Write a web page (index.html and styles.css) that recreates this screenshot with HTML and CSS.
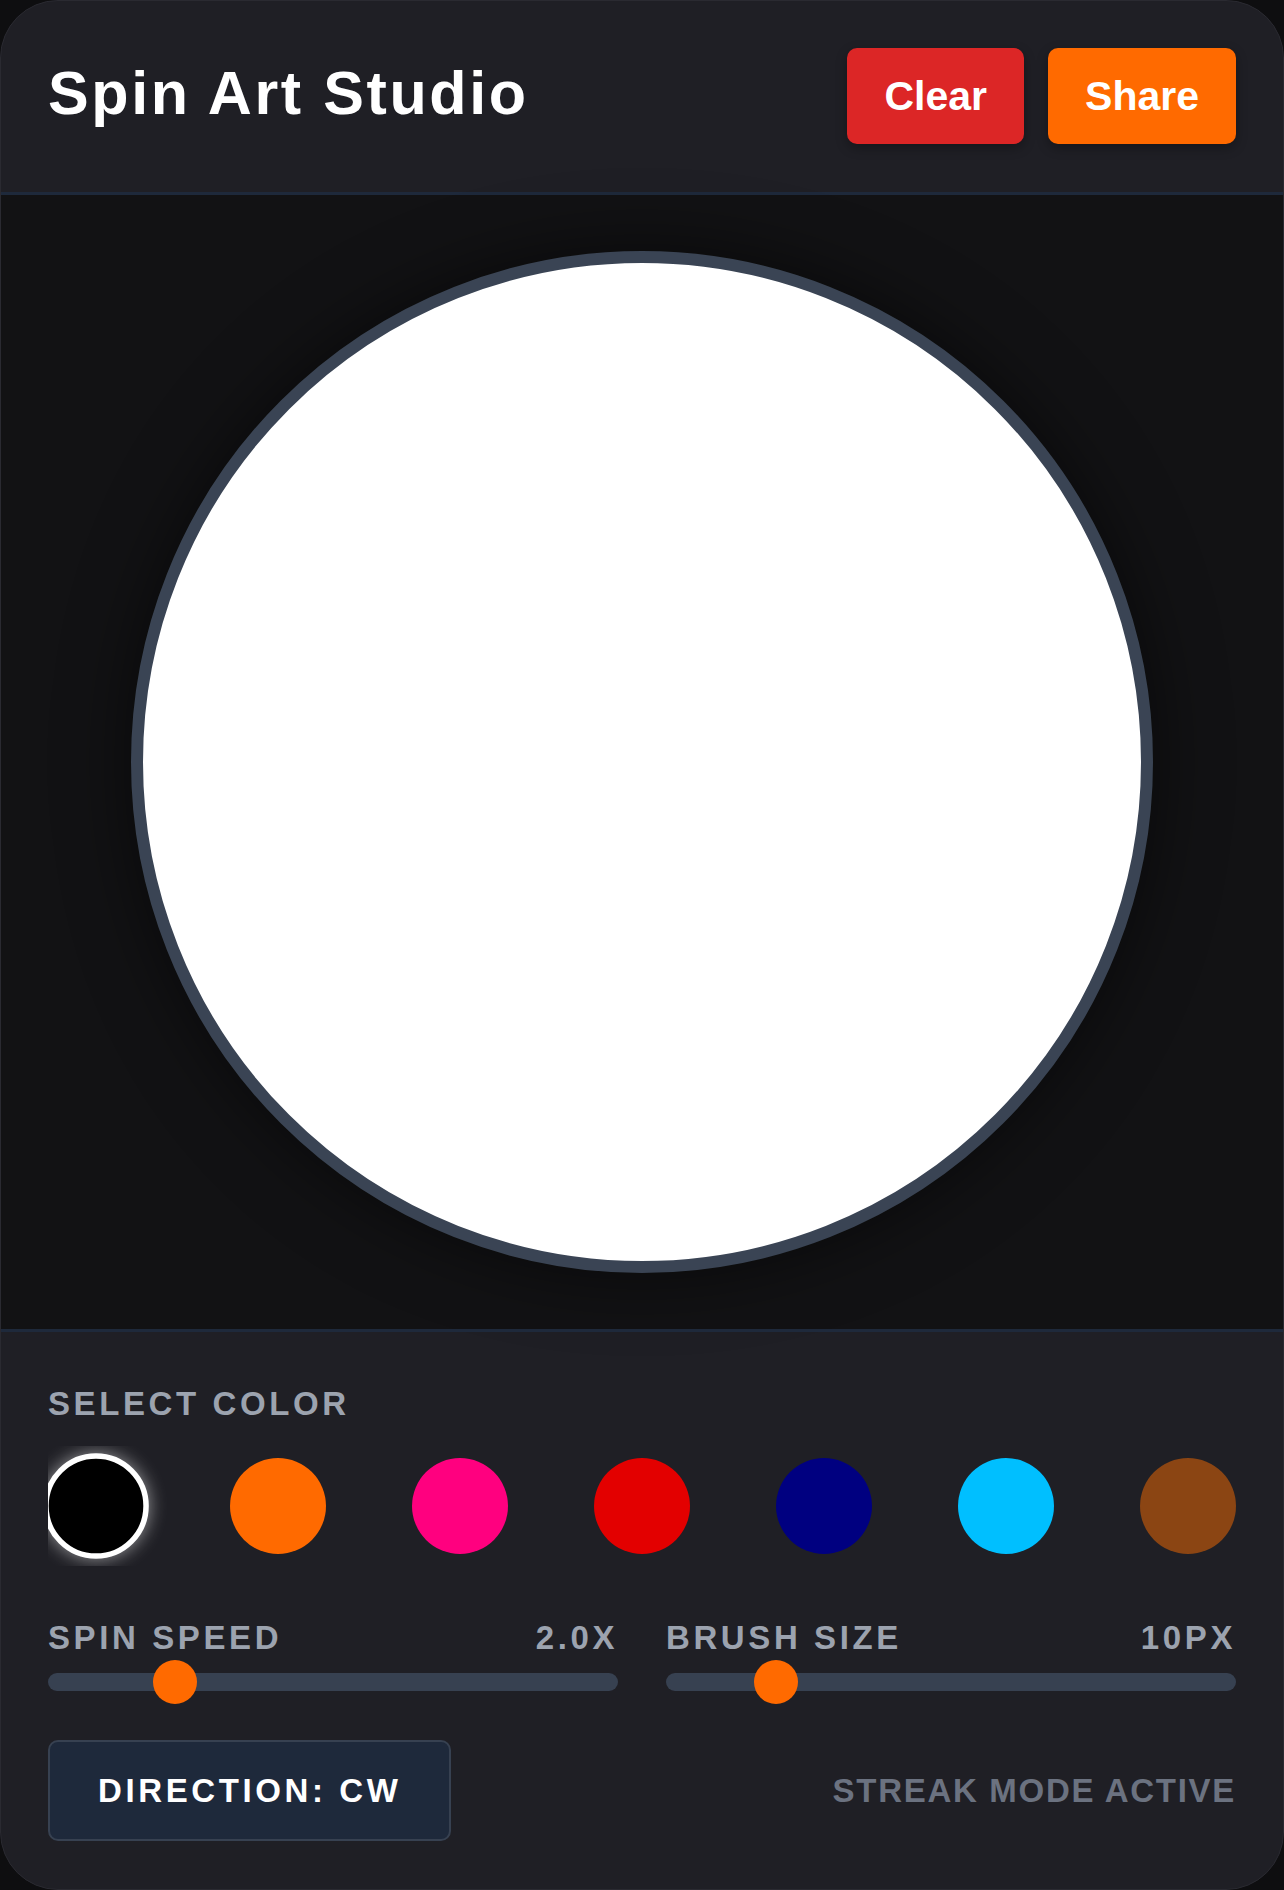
FILE: index.html
```html
<!DOCTYPE html>
<html lang="en">
  <head>
    <meta charset="UTF-8" />
    <meta name="viewport" content="width=device-width, initial-scale=1.0" />
    <title>Spin Art Studio</title>

    <link rel="stylesheet" href="styles.css">
  </head>

  <body>
    <div class="studio">
      <header class="top-bar">
        <h1 class="title">Spin Art Studio</h1>
        <div class="actions">
          <button class="btn btn-clear" id="clear" type="button">Clear</button>
          <button class="btn btn-share" id="share" type="button">Share</button>
        </div>
      </header>

      <main class="stage">
        <canvas id="disc" class="disc" width="998" height="998"></canvas>
      </main>

      <section class="controls">
        <h3 class="label">Select Color</h3>
        <div class="palette">
          <button class="swatch black selected" type="button"></button>
          <button class="swatch orange" type="button"></button>
          <button class="swatch pink" type="button"></button>
          <button class="swatch red" type="button"></button>
          <button class="swatch navy" type="button"></button>
          <button class="swatch cyan" type="button"></button>
          <button class="swatch brown" type="button"></button>
        </div>

        <div class="sliders">
          <div class="slider">
            <div class="slider-head">
              <span class="label">Spin Speed</span>
              <span class="label" id="speed-value">2.0x</span>
            </div>
            <input type="range" id="speed" min="0" max="10" step="0.1" value="2" />
          </div>
          <div class="slider">
            <div class="slider-head">
              <span class="label">Brush Size</span>
              <span class="label" id="size-value">10px</span>
            </div>
            <input type="range" id="size" min="2" max="50" step="1" value="10" />
          </div>
        </div>

        <div class="footer-row">
          <button class="direction" id="direction" type="button">Direction: CW</button>
          <span class="streak">Streak mode active</span>
        </div>
      </section>
    </div>

    <script>
      const speed = document.getElementById('speed');
      const size = document.getElementById('size');
      const direction = document.getElementById('direction');
      const swatches = document.querySelectorAll('.swatch');
      let clockwise = true;

      speed.addEventListener('input', (e) => {
        document.getElementById('speed-value').textContent =
          Number(e.target.value).toFixed(1) + 'x';
      });

      size.addEventListener('input', (e) => {
        document.getElementById('size-value').textContent = e.target.value + 'px';
      });

      direction.addEventListener('click', () => {
        clockwise = !clockwise;
        direction.textContent = 'Direction: ' + (clockwise ? 'CW' : 'CCW');
      });

      swatches.forEach((swatch) => {
        swatch.addEventListener('click', () => {
          swatches.forEach((s) => s.classList.remove('selected'));
          swatch.classList.add('selected');
        });
      });
    </script>
  </body>
</html>
```

FILE: styles.css
```css
:root {
  --page-color: #0e0e10;
  --panel-color: #1f1f25;
  --stage-color: #121214;
  --line-color: #1e293b;
  --track-color: #374151;
  --accent-color: #ff6a00;
  --muted-color: #9ca3af;
  --font-family: "Liberation Sans", Arial, sans-serif;
}

* {
  box-sizing: border-box;
}

body {
  margin: 0;
  height: 100vh;
  background-color: var(--page-color);
  font-family: var(--font-family);
  color: #fff;
}

.studio {
  display: flex;
  flex-direction: column;
  height: 100vh;
  border: 1px solid #2a2a31;
  border-radius: 58px;
  overflow: hidden;
  background-color: var(--panel-color);
}

.top-bar {
  display: flex;
  align-items: center;
  justify-content: space-between;
  padding: 47px 47px 48px;
  border-bottom: 3px solid var(--line-color);
}

.title {
  margin: 0 0 5px;
  font-size: 61px;
  font-weight: bold;
  letter-spacing: 2.6px;
  line-height: 1.15;
}

.actions {
  display: flex;
  gap: 24px;
}

.btn {
  padding: 24px 37px;
  border: none;
  border-radius: 10px;
  font-family: inherit;
  font-size: 41px;
  font-weight: bold;
  line-height: 48px;
  color: #fff;
  cursor: pointer;
  box-shadow: 0 4px 12px rgba(0, 0, 0, 0.3);
}

.btn-clear {
  background-color: #dc2626;
}

.btn-share {
  background-color: var(--accent-color);
}

.stage {
  flex: 1;
  display: flex;
  align-items: center;
  justify-content: center;
  background-color: var(--stage-color);
}

.disc {
  display: block;
  width: 1022px;
  height: 1022px;
  border: 12px solid #3a4454;
  border-radius: 50%;
  background-color: #fff;
  box-shadow: 0 0 70px rgba(0, 0, 0, 0.55);
}

.controls {
  padding: 52px 47px 48px;
  border-top: 3px solid var(--line-color);
}

.label {
  margin: 0;
  font-size: 33px;
  font-weight: bold;
  line-height: 40px;
  letter-spacing: 3.6px;
  text-transform: uppercase;
  color: var(--muted-color);
}

.palette {
  display: flex;
  justify-content: space-between;
  margin-top: 22px;
  padding: 12px 0;
  overflow-x: auto;
  scrollbar-width: none;
}

.swatch {
  flex: none;
  width: 96px;
  height: 96px;
  padding: 0;
  border: none;
  border-radius: 50%;
  cursor: pointer;
}

.swatch.selected {
  border: 5px solid #fff;
  transform: scale(1.1);
  box-shadow: 0 0 16px rgba(255, 255, 255, 0.55);
}

.black { background-color: #000; }
.orange { background-color: #ff6a00; }
.pink { background-color: #ff007f; }
.red { background-color: #e30000; }
.navy { background-color: #000080; }
.cyan { background-color: #00bfff; }
.brown { background-color: #8b4513; }

.sliders {
  display: grid;
  grid-template-columns: 1fr 1fr;
  gap: 48px;
  margin-top: 52px;
}

.slider-head {
  display: flex;
  justify-content: space-between;
  margin-bottom: 2px;
}

.slider input[type="range"] {
  -webkit-appearance: none;
  appearance: none;
  display: block;
  width: 100%;
  height: 44px;
  margin: 0;
  background: transparent;
  cursor: pointer;
}

.slider input[type="range"]::-webkit-slider-runnable-track {
  height: 18px;
  border-radius: 9px;
  background-color: var(--track-color);
}

.slider input[type="range"]::-webkit-slider-thumb {
  -webkit-appearance: none;
  width: 44px;
  height: 44px;
  margin-top: -13px;
  border: none;
  border-radius: 50%;
  background-color: var(--accent-color);
}

.footer-row {
  display: flex;
  align-items: center;
  justify-content: space-between;
  margin-top: 36px;
}

.direction {
  padding: 32px 48px;
  border: 2px solid #374151;
  border-radius: 10px;
  background-color: var(--line-color);
  font-family: inherit;
  font-size: 33px;
  font-weight: bold;
  line-height: 33px;
  letter-spacing: 3.6px;
  text-transform: uppercase;
  color: #fff;
  cursor: pointer;
}

.streak {
  font-size: 33px;
  font-weight: bold;
  letter-spacing: 1.7px;
  text-transform: uppercase;
  color: #6b7280;
}
```
